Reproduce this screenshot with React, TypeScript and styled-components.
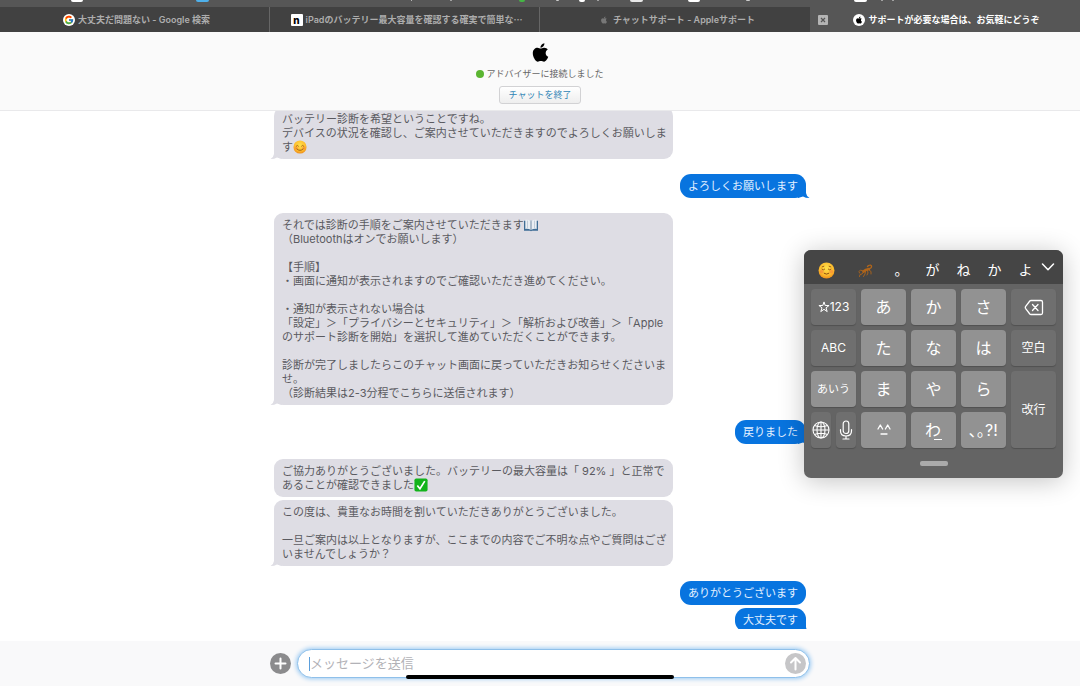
import React from "react";
import styled, { createGlobalStyle } from "styled-components";
import { FaApple } from "react-icons/fa";
import { FcGoogle } from "react-icons/fc";

const GlobalStyle = createGlobalStyle`
  * { box-sizing: border-box; }
  body {
    margin: 0;
    background: #fff;
    font-family: Inter, "Noto Sans CJK JP", sans-serif;
  }
  button, input { font-family: inherit; }
  button { padding: 0; border: 0; background: none; cursor: pointer; }
`;

const Page = styled.div`
  display: flex;
  flex-direction: column;
  height: 100vh;
  min-width: 640px;
  position: relative;
  overflow: hidden;
`;

/* Browser chrome */

const FavoritesBar = styled.div`
  display: flex;
  flex: none;
  height: 7px;
  background: #565656;
`;

const FavoriteEdge = styled.span<{ $gap: number; $width: number; $color: string }>`
  flex: none;
  width: ${(p) => p.$width}px;
  height: ${(p) => (p.$width > 5 ? 2 : 1)}px;
  margin-left: ${(p) => p.$gap}px;
  border-radius: 0 0 2px 2px;
  background: ${(p) => p.$color};
`;

const TabBar = styled.nav`
  display: grid;
  grid-template-columns: repeat(4, 1fr);
  flex: none;
  height: 25px;
`;

const Tab = styled.a<{ $active?: boolean; $divider?: boolean }>`
  display: flex;
  align-items: center;
  justify-content: center;
  gap: 3px;
  position: relative;
  min-width: 0;
  padding: 0 14px 0 18px;
  border-right: 1px solid ${(p) => (p.$divider ? "#666" : "transparent")};
  background: ${(p) => (p.$active ? "#565656" : "#414141")};
  background-clip: ${(p) => (p.$divider ? "padding-box" : "border-box")};
  color: ${(p) => (p.$active ? "#fff" : "#adadad")};
  font-size: 9px;
  font-weight: ${(p) => (p.$active ? 700 : 600)};
  line-height: 14px;
  text-decoration: none;
  white-space: nowrap;
`;

const Japanese = styled.span`
  font-family: "Noto Sans CJK JP", sans-serif;
`;

const Favicon = styled.span<{ $round?: boolean; $plain?: boolean }>`
  display: grid;
  place-items: center;
  flex: none;
  width: 12px;
  height: 12px;
  border-radius: ${(p) => (p.$round ? "50%" : "1px")};
  background: ${(p) => (p.$plain ? "transparent" : "#fff")};
  color: ${(p) => (p.$plain ? "#777" : "#000")};
  font-size: 10px;
  font-weight: 800;
  line-height: 10px;
`;

const CloseTab = styled.button`
  display: grid;
  place-items: center;
  position: absolute;
  left: 8px;
  top: 8px;
  width: 10px;
  height: 10px;
  border-radius: 1px;
  background: #b4b4b4;
`;

/* Chat header */

const Header = styled.header`
  display: flex;
  flex-direction: column;
  align-items: center;
  flex: none;
  height: 79px;
  padding-top: 10px;
  border-bottom: 1px solid #e9e9eb;
  background: #fafafa;
  color: #000;
`;

const Status = styled.div`
  display: flex;
  align-items: center;
  gap: 2px;
  margin: 4px 0 5px;
  color: #666;
  font-size: 9px;
  line-height: 14px;
`;

const OnlineDot = styled.span`
  width: 8px;
  height: 8px;
  border-radius: 50%;
  background: #5bb531;
`;

const EndChat = styled.button`
  width: 82px;
  height: 18px;
  border: 1px solid #d2d2d4;
  border-radius: 3px;
  background: linear-gradient(#fff, #eee);
  color: #2f84b5;
  font-size: 9px;
  line-height: 14px;
`;

/* Conversation */

const Conversation = styled.main`
  flex: 1;
  min-height: 0;
  margin-bottom: 12px;
  overflow: hidden;
`;

const MessageList = styled.div`
  display: flex;
  flex-direction: column;
  gap: 15px;
  max-width: 540px;
  margin: -4px auto 0;
  padding: 0 4px;
`;

const Group = styled.div<{ $mine?: boolean }>`
  display: flex;
  flex-direction: column;
  align-items: ${(p) => (p.$mine ? "flex-end" : "flex-start")};
  gap: 3px;
`;

const Bubble = styled.div<{ $mine?: boolean }>`
  position: relative;
  width: ${(p) => (p.$mine ? "auto" : "75%")};
  padding: ${(p) => (p.$mine ? "5px 8px" : "5px 4px 5px 8px")};
  border-radius: ${(p) => (p.$mine ? 11 : 9)}px;
  background: ${(p) => (p.$mine ? "#0874df" : "#dedde4")};
  color: ${(p) => (p.$mine ? "#e4f1ff" : "#5a5a60")};
  font-size: 11px;
  line-height: 14px;
  white-space: pre;
`;

const Tail = styled.svg<{ $mine?: boolean }>`
  position: absolute;
  bottom: 0;
  ${(p) => (p.$mine ? "right: -4px; transform: scaleX(-1);" : "left: -4px;")}
  width: 12px;
  height: 10px;
  fill: ${(p) => (p.$mine ? "#0874df" : "#dedde4")};
`;

const EmojiIcon = styled.svg<{ $size?: number }>`
  width: ${(p) => p.$size ?? 14}px;
  height: ${(p) => p.$size ?? 14}px;
  vertical-align: -3px;
`;

/* Composer */

const Composer = styled.footer`
  flex: none;
  height: 45px;
  padding-top: 8px;
  background: #f9f9fa;
`;

const ComposerRow = styled.div`
  display: flex;
  align-items: center;
  gap: 6px;
  max-width: 540px;
  margin: 0 auto;
`;

const RoundButton = styled.button<{ $color: string }>`
  display: grid;
  place-items: center;
  flex: none;
  width: 21px;
  height: 21px;
  border-radius: 50%;
  background: ${(p) => p.$color};
`;

const Field = styled.label`
  display: flex;
  align-items: center;
  flex: 1;
  height: 29px;
  padding: 0 3px 0 11px;
  border: 1px solid #8fc0ea;
  border-radius: 15px;
  background: #fff;
  box-shadow: 0 0 4px 1px #9ccbf3;
`;

const Caret = styled.span`
  flex: none;
  width: 1px;
  height: 14px;
  background: #5b9fdc;
`;

const MessageInput = styled.input`
  flex: 1;
  min-width: 0;
  height: 22px;
  padding: 0 0 2px;
  border: 0;
  outline: 0;
  background: transparent;
  font-size: 13px;
  &::placeholder { color: #b2b2b7; opacity: 1; }
`;

const HomeIndicator = styled.div`
  position: absolute;
  left: 50%;
  bottom: 7px;
  width: 268px;
  height: 4px;
  margin-left: -134px;
  border-radius: 2px;
  background: #000;
`;

/* Floating keyboard */

const Keyboard = styled.section`
  position: absolute;
  top: 250px;
  right: 17px;
  width: 259px;
  border-radius: 7px;
  overflow: hidden;
  background: #646464;
  box-shadow: 0 3px 26px rgba(0, 0, 0, 0.24);
  color: #fff;
`;

const Candidates = styled.div`
  display: flex;
  align-items: center;
  height: 34px;
  padding: 6px 0 0 2px;
  background: #454545;
`;

const Candidate = styled.button<{ $wide?: boolean }>`
  display: grid;
  place-items: center;
  flex: none;
  width: ${(p) => (p.$wide ? 40 : 31)}px;
  height: 24px;
  color: #fff;
  font-size: 14px;
  line-height: 20px;
`;

const Collapse = styled(Candidate)`
  width: 14px;
  padding-bottom: 7px;
`;

const Keys = styled.div`
  display: grid;
  grid-template-columns: repeat(5, 1fr);
  grid-auto-rows: 36px;
  gap: 5px;
  padding: 5px 7px 13px;
`;

const Key = styled.button<{ $light?: boolean; $tall?: boolean; $size?: number }>`
  display: flex;
  align-items: center;
  justify-content: center;
  min-width: 0;
  grid-row: ${(p) => (p.$tall ? "3 / 5" : "auto")};
  grid-column: ${(p) => (p.$tall ? "5" : "auto")};
  border-radius: 4px;
  background: ${(p) => (p.$light ? "#929292" : "#6f6f6f")};
  box-shadow: 0 1px 1px rgba(0, 0, 0, 0.2);
  color: #fff;
  font-size: ${(p) => p.$size ?? 16}px;
  line-height: 20px;
  white-space: nowrap;
`;

const SplitKeys = styled.div`
  display: grid;
  grid-template-columns: 1fr 1fr;
  gap: 5px;
`;

const Underscore = styled.svg`
  width: 8px;
  height: 20px;
  margin-left: -7px;
`;

const Handle = styled.div`
  width: 28px;
  height: 5px;
  margin: 0 auto 12px;
  border-radius: 2px;
  background: #aaa;
`;

const BubbleTail = ({ mine }: { mine?: boolean }) => (
  <Tail $mine={mine} viewBox="0 0 12 10" aria-hidden="true">
    <path d="M4 0V5Q3.500 8.500 0.500 10Q4.500 10 7 8.500L12 10V0Z" />
  </Tail>
);

const Smile = ({ size, relaxed }: { size?: number; relaxed?: boolean }) => (
  <EmojiIcon $size={size} viewBox="0 0 16 16" role="img" aria-label="笑顔">
    <defs>
      <radialGradient id="face" cx="50%" cy="35%" r="65%">
        <stop offset="0" stopColor="#ffe04a" />
        <stop offset="0.7" stopColor="#fdb92b" />
        <stop offset="1" stopColor="#ee8d1b" />
      </radialGradient>
    </defs>
    <circle cx="8" cy="8" r="7.500" fill="url(#face)" />
    <circle cx="3.500" cy="9" r="1.800" fill="#f47a3c" opacity="0.5" />
    <circle cx="12.500" cy="9" r="1.800" fill="#f47a3c" opacity="0.5" />
    <g fill="none" stroke="#8a4a0e" strokeLinecap="round">
      <path
        d={
          relaxed
            ? "M3.700 6.800Q5 8.200 6.300 6.800M9.700 6.800Q11 8.200 12.300 6.800M3.900 4.600L5.500 4M12.100 4.600L10.500 4"
            : "M3.700 7Q5 5 6.300 7M9.700 7Q11 5 12.300 7"
        }
        strokeWidth="0.8"
      />
      <path d={relaxed ? "M5.800 10.700Q8 12.300 10.200 10.700" : "M4.500 10.300Q8 13.600 11.500 10.300"} strokeWidth="0.9" />
    </g>
  </EmojiIcon>
);

const Book = () => (
  <EmojiIcon viewBox="0 0 16 16" role="img" aria-label="本">
    <path d="M0 3V14.500H7L8 15.200L9 14.500H16V3Z" fill="#3f6e96" />
    <path d="M1.500 2Q5.500 1.500 8 3.500Q10.500 1.500 14.500 2V12.500Q11 12 8 13.800Q5 12 1.500 12.500Z" fill="#e9eef3" />
    <path d="M8 3.500V13.800" stroke="#5e7d98" strokeWidth="1" />
    <path d="M4 3V11.800M12 3V11.800" stroke="#b9c7d3" strokeWidth="1" />
  </EmojiIcon>
);

const Check = () => (
  <EmojiIcon viewBox="0 0 16 16" role="img" aria-label="チェック">
    <rect x="0.500" y="0.500" width="15" height="15" rx="2" fill="#12b31b" />
    <path d="M3.800 8.500L6.800 12.300L12.300 3.600" fill="none" stroke="#fff" strokeWidth="1.900" />
  </EmojiIcon>
);

const Scorpion = () => (
  <EmojiIcon $size={16} viewBox="0 0 16 16" role="img" aria-label="さそり">
    <g fill="none" stroke="#b0651a" strokeLinecap="round" strokeLinejoin="round">
      <path d="M5.500 9.500Q7.500 7.500 11 7" strokeWidth="2.600" />
      <path d="M11 7Q14 6 13.500 4Q13 2.500 10.500 3.500L9.500 4.500" strokeWidth="1.300" />
      <path d="M5 9L2.500 8L1 9.500L1.500 11M5.500 10L4 12L2 12.500L1.500 14.500M7.500 9.500L7 12L5.500 14.500M9.500 8.500L10 11L9 13M11 8L13 9.500L13 12" strokeWidth="0.9" />
    </g>
  </EmojiIcon>
);

const DeleteIcon = () => (
  <svg width="20" height="17" viewBox="0 0 20 17" fill="none" stroke="#fff" strokeWidth="1.300" strokeLinecap="round" strokeLinejoin="round" aria-hidden="true">
    <path d="M7 1.500H17Q18.500 1.500 18.500 3V14Q18.500 15.500 17 15.500H7Q6.300 15.500 5.800 15L1.500 9.300Q1 8.500 1.500 7.700L5.800 2Q6.300 1.500 7 1.500Z" />
    <path d="M8.500 5.500L14 11.500M14 5.500L8.500 11.500" />
  </svg>
);

const GlobeIcon = () => (
  <svg width="18" height="18" viewBox="0 0 18 18" fill="none" stroke="#fff" strokeWidth="1.100" aria-hidden="true">
    <circle cx="9" cy="9" r="8" />
    <ellipse cx="9" cy="9" rx="4" ry="8" />
    <path d="M9 1V17M1 9H17M2.600 4.500Q9 7 15.400 4.500M2.600 13.500Q9 11 15.400 13.500" />
  </svg>
);

const MicIcon = () => (
  <svg width="14" height="20" viewBox="0 0 14 20" fill="none" stroke="#fff" strokeWidth="1.200" strokeLinecap="round" aria-hidden="true">
    <rect x="4.200" y="1" width="5.600" height="12.500" rx="2.800" />
    <path d="M1.500 9.500V11Q1.500 16 7 16Q12.500 16 12.500 11V9.500M7 16V19M4 19H10" />
  </svg>
);

const StarIcon = () => (
  <svg width="12" height="12" viewBox="0 0 12 12" fill="none" stroke="#fff" strokeWidth="1" strokeLinejoin="round" aria-label="☆" role="img">
    <path d="M6 0.900L7.200 4.500H11.100L8 6.800L9.200 10.600L6 8.300L2.800 10.600L4 6.800L0.900 4.500H4.800Z" />
  </svg>
);

const favorites: [number, number, string][] = [
  [71, 12, "#fff"], [113, 13, "#4fb0ea"], [202, 1, "#bbb"], [38, 2, "#bbb"], [67, 6, "#45b545"],
  [31, 3, "#ccc"], [20, 6, "#fff"], [12, 2, "#bbb"], [31, 13, "#e8e8e8"], [45, 12, "#fff"],
  [46, 4, "#ccc"], [104, 13, "#fff"], [14, 2, "#bbb"], [9, 2, "#bbb"],
];

const steps = `
（Bluetoothはオンでお願いします）

【手順】
・画面に通知が表示されますのでご確認いただき進めてください。

・通知が表示されない場合は
「設定」＞「プライバシーとセキュリティ」＞「解析および改善」＞「Apple
のサポート診断を開始」を選択して進めていただくことができます。

診断が完了しましたらこのチャット画面に戻っていただきお知らせくださいま
せ。
（診断結果は2-3分程でこちらに送信されます）`;

export default function App() {
  return (
    <Page>
      <GlobalStyle />
      <FavoritesBar aria-hidden="true">
        {favorites.map(([gap, width, color], i) => (
          <FavoriteEdge key={i} $gap={gap} $width={width} $color={color} />
        ))}
      </FavoritesBar>
      <TabBar>
        <Tab href="#google" $divider>
          <Favicon $round><FcGoogle size={10} /></Favicon>
          <span>大丈夫だ問題ない - Google 検索</span>
        </Tab>
        <Tab href="#ipad" $divider>
          <Favicon>n</Favicon>
          <span>iPadのバッテリー最大容量を確認する確実で簡単な<Japanese>…</Japanese></span>
        </Tab>
        <Tab href="#support">
          <Favicon $plain><FaApple size={8} /></Favicon>
          <span>チャットサポート - Appleサポート</span>
        </Tab>
        <Tab href="#chat" $active>
          <CloseTab aria-label="タブを閉じる">
            <svg width="6" height="6" viewBox="0 0 6 6" stroke="#555" strokeWidth="1.200" aria-hidden="true">
              <path d="M1 1L5 5M5 1L1 5" />
            </svg>
          </CloseTab>
          <Favicon $round><FaApple size={8} /></Favicon>
          <span>サポートが必要な場合は、お気軽にどうぞ</span>
        </Tab>
      </TabBar>

      <Header>
        <FaApple size={21} aria-label="Apple" />
        <Status><OnlineDot />アドバイザーに接続しました</Status>
        <EndChat>チャットを終了</EndChat>
      </Header>

      <Conversation>
        <MessageList>
          <Group>
            <Bubble>
              {"バッテリー診断を希望ということですね。\nデバイスの状況を確認し、ご案内させていただきますのでよろしくお願いしま\nす"}
              <Smile />
              <BubbleTail />
            </Bubble>
          </Group>
          <Group $mine>
            <Bubble $mine>よろしくお願いします<BubbleTail mine /></Bubble>
          </Group>
          <Group>
            <Bubble>
              それでは診断の手順をご案内させていただきます<Book />
              {steps}
              <BubbleTail />
            </Bubble>
          </Group>
          <Group $mine>
            <Bubble $mine>戻りました<BubbleTail mine /></Bubble>
          </Group>
          <Group>
            <Bubble>
              {"ご協力ありがとうございました。バッテリーの最大容量は「 92% 」と正常で\nあることが確認できました"}
              <Check />
            </Bubble>
            <Bubble>
              {"この度は、貴重なお時間を割いていただきありがとうございました。\n\n一旦ご案内は以上となりますが、ここまでの内容でご不明な点やご質問はござ\nいませんでしょうか？"}
              <BubbleTail />
            </Bubble>
          </Group>
          <Group $mine>
            <Bubble $mine>ありがとうございます</Bubble>
            <Bubble $mine>大丈夫です<BubbleTail mine /></Bubble>
          </Group>
        </MessageList>
      </Conversation>

      <Composer>
        <ComposerRow>
          <RoundButton $color="#8b8b8d" aria-label="添付">
            <svg width="13" height="13" viewBox="0 0 13 13" stroke="#fff" strokeWidth="2" strokeLinecap="round" aria-hidden="true">
              <path d="M6.500 1.500V11.500M1.500 6.500H11.500" />
            </svg>
          </RoundButton>
          <Field>
            <Caret />
            <MessageInput aria-label="メッセージ" placeholder="メッセージを送信" />
            <RoundButton $color="#c6c6c8" aria-label="送信">
              <svg width="13" height="15" viewBox="0 0 13 15" fill="none" stroke="#fff" strokeWidth="2" strokeLinecap="round" strokeLinejoin="round" aria-hidden="true">
                <path d="M6.500 13.500V2M2 6.500L6.500 2L11 6.500" />
              </svg>
            </RoundButton>
          </Field>
        </ComposerRow>
      </Composer>
      <HomeIndicator />

      <Keyboard aria-label="キーボード">
        <Candidates>
          <Candidate $wide><Smile size={17} relaxed /></Candidate>
          <Candidate $wide><Scorpion /></Candidate>
          {["。", "が", "ね", "か", "よ"].map((c) => (
            <Candidate key={c}>{c}</Candidate>
          ))}
          <Collapse aria-label="候補を表示">
            <svg width="14" height="8" viewBox="0 0 14 8" fill="none" stroke="#fff" strokeWidth="1.500" strokeLinecap="round" strokeLinejoin="round" aria-hidden="true">
              <path d="M1.500 1L7 6.800L12.500 1" />
            </svg>
          </Collapse>
        </Candidates>
        <Keys>
          <Key $size={12}><StarIcon />123</Key>
          <Key $light>あ</Key>
          <Key $light>か</Key>
          <Key $light>さ</Key>
          <Key aria-label="削除"><DeleteIcon /></Key>
          <Key $size={12}>ABC</Key>
          <Key $light>た</Key>
          <Key $light>な</Key>
          <Key $light>は</Key>
          <Key $size={12}>空白</Key>
          <Key $light $size={11}>あいう</Key>
          <Key $light>ま</Key>
          <Key $light>や</Key>
          <Key $light>ら</Key>
          <Key $tall $size={12}>改行</Key>
          <SplitKeys>
            <Key aria-label="言語"><GlobeIcon /></Key>
            <Key aria-label="音声入力"><MicIcon /></Key>
          </SplitKeys>
          <Key $light aria-label="顔文字">
            <svg width="14" height="14" viewBox="0 0 14 14" fill="none" stroke="#fff" strokeWidth="1.300" strokeLinecap="round" strokeLinejoin="round" aria-hidden="true">
              <path d="M1 6L3.300 2L5.600 6M8.400 6L10.700 2L13 6M4 11H10" />
            </svg>
          </Key>
          <Key $light>
            わ
            <Underscore viewBox="0 0 8 20" stroke="#fff" aria-hidden="true">
              <path d="M0 19.500H8" />
            </Underscore>
          </Key>
          <Key $light>､｡?!</Key>
        </Keys>
        <Handle />
      </Keyboard>
    </Page>
  );
}
